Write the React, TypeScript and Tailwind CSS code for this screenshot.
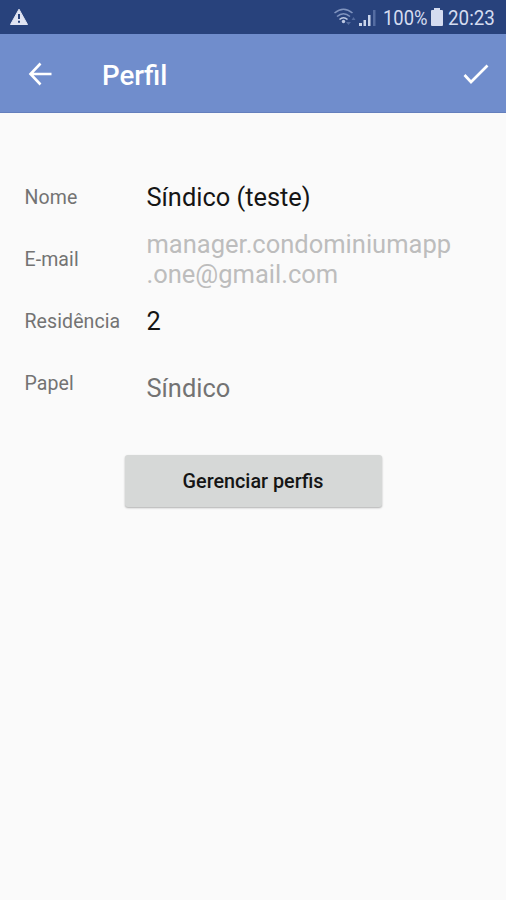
import type { ReactNode } from "react";

function StatusBar() {
  return (
    <div className="flex h-[34px] items-center justify-between bg-[#28427c] pl-[9px] pr-[11px] text-[#d5dcf0]">
      <svg width="20" height="18" viewBox="0 0 20 18">
        <path d="M10 1.2 18.5 16.5H1.5Z" fill="#e0e4f3" stroke="#e0e4f3" strokeLinejoin="round" />
        <path d="M10 6v5M10 12.7v2" stroke="#28427c" strokeWidth="2" />
      </svg>
      <div className="flex items-center">
        <svg width="46" height="22" viewBox="334 6 46 22" fill="none" className="mr-[3px]">
          <g stroke="#8094bf" strokeWidth="1.6">
            <path d="M334.5 13Q343.5 5.5 352.5 13" />
            <path d="M337 16.5Q343.5 11 350 16.5" />
            <path d="M339.5 19.5Q343.5 16 347.5 19.5" stroke="#bdc9e3" />
          </g>
          <circle cx="343.5" cy="21.5" r="1.7" fill="#bdc9e3" />
          <path d="m346 22 2.5 3 2.5-3zM351.5 20l2-3 2 3z" fill="#536b9f" />
          <g fill="#cbd6ec">
            <path d="M359 23h3v3h-3zM363.5 20h2.5v6h-2.5zM368 15h2.5v11H368z" />
            <path d="M373 10h2.5v16H373z" fill="#556da2" />
          </g>
        </svg>
        <span className="w-[45px] whitespace-nowrap pt-px text-[20px] leading-[34px]"><span className="inline-block origin-left scale-x-[.92]">100%</span></span>
        <svg width="12" height="18" viewBox="0 0 12 18" className="ml-[3px] mr-[5px]" fill="#d5dcf0">
          <path d="M3 0h6v2h2q1 0 1 1v14q0 1-1 1H1q-1 0-1-1V3q0-1 1-1h2z" />
        </svg>
        <span className="w-[47px] whitespace-nowrap pt-px text-[20px] leading-[34px]"><span className="inline-block origin-left scale-x-[.94]">20:23</span></span>
      </div>
    </div>
  );
}

function Header() {
  return (
    <header className="flex h-[79px] items-center border-b border-[#647fbd] bg-[#708dcc] pl-[28px] pr-[17px] pt-px text-white">
      <button aria-label="Voltar">
        <svg width="24" height="24" viewBox="0 0 24 24" fill="none" stroke="currentColor" strokeWidth="2.6">
          <path d="M23.5 12H3M12.5 1.5 2.5 12 12.5 22.5" />
        </svg>
      </button>
      <h1 className="ml-[50px] flex-1 pt-[4px] text-[27.7px] font-medium leading-8">Perfil</h1>
      <button aria-label="Salvar">
        <svg width="26" height="22" viewBox="0 0 26 22" fill="none" stroke="currentColor" strokeWidth="2.7">
          <path d="m1.5 12 6.5 7L24.5 2.5" />
        </svg>
      </button>
    </header>
  );
}

function Row({ label, children }: { label: string; children: ReactNode }) {
  return (
    <div className="flex h-[62px] items-center pl-[24.5px]">
      <div className="w-[122px] text-[19.5px] tracking-[0.1px] text-[#737373]">{label}</div>
      {children}
    </div>
  );
}

export default function App() {
  return (
    <main className="min-h-[900px] w-full bg-[#fafafa] font-['Roboto',sans-serif]">
      <StatusBar />
      <Header />
      <section className="pt-[54px]">
        <Row label="Nome">
          <div className="pb-[2px] text-[25.4px] leading-[30px] text-[#151515]">Síndico (teste)</div>
        </Row>
        <Row label="E-mail">
          <div className="pb-px text-[25.5px] leading-[29.5px] text-[#bdbdbd]">
            manager.condominiumapp
            <br />
            .one@gmail.com
          </div>
        </Row>
        <Row label="Residência">
          <div className="pb-[2px] text-[25.4px] leading-[30px] text-[#151515]">2</div>
        </Row>
        <Row label="Papel">
          <div className="pt-[8px] text-[25.4px] leading-[30px] text-[#737373]">Síndico</div>
        </Row>
      </section>
      <button className="mx-auto mt-[40px] flex h-[52px] w-[257px] items-center justify-center rounded-[3px] bg-[#d6d8d7] pt-[2px] text-[19.8px] font-medium text-[#151515] shadow-[0_1px_2px_rgba(0,0,0,0.3)]">
        Gerenciar perfis
      </button>
    </main>
  );
}
